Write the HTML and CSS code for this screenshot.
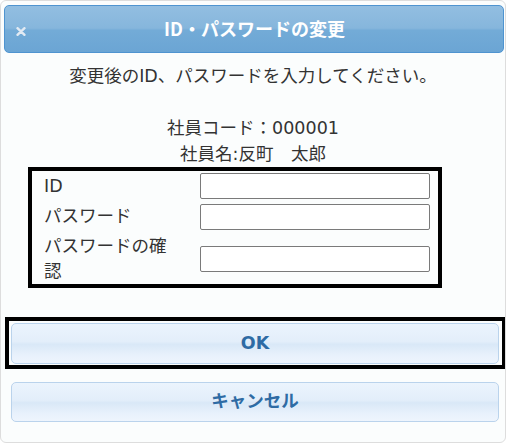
FILE: index.html
```html
<!DOCTYPE html>
<html lang="ja">
<head>
    <meta charset="UTF-8">
    <meta name="viewport" content="width=device-width, initial-scale=1.0">
    <title>ID・パスワードの変更</title>
    <link rel="stylesheet" href="styles.css">
</head>
<body>
    <div class="dialog">
        <!-- タイトルバー -->
        <div class="title-bar">
            <span class="close">
                <svg width="10" height="9" viewBox="0 0 10 9">
                    <path d="M1.5 1.2 L8.5 7.8 M8.5 1.2 L1.5 7.8" stroke="#e2eaf3" stroke-width="2.4" stroke-linecap="round"/>
                </svg>
            </span>
            <span class="title">ID・パスワードの変更</span>
        </div>

        <!-- メッセージ -->
        <div class="message">
            <p>変更後のID、パスワードを入力してください。</p>
            <p>&nbsp;</p>
            <p>社員コード：000001</p>
            <p>社員名:反町　太郎</p>
        </div>

        <!-- 入力欄 -->
        <div class="form-box">
            <label class="label">ID</label>
            <input type="text" class="field">
            <label class="label">パスワード</label>
            <input type="password" class="field">
            <label class="label tall">パスワードの確認</label>
            <input type="password" class="field">
        </div>

        <!-- ボタン -->
        <div class="ok-frame">
            <button class="button">OK</button>
        </div>
        <button class="button cancel">キャンセル</button>
    </div>
</body>
</html>
```

FILE: styles.css
```css
/* 全体 */
body {
    margin: 0;
    padding: 0;
    background-color: #ffffff;
    font-family: "DejaVu Sans", "Noto Sans CJK JP", sans-serif;
    color: #333333;
}

.dialog {
    box-sizing: border-box;
    width: 506px;
    height: 443px;
    border: 1px solid #dddddd;
    border-radius: 6px;
    background-color: #fbfdfd;
    overflow: hidden;
}

/* タイトルバー */
.title-bar {
    box-sizing: border-box;
    display: grid;
    grid-template-columns: 1fr auto 1fr;
    align-items: center;
    height: 48px;
    margin: 4px 1px 0 3px;
    padding-left: 11px;
    border: 1px solid #4f94d0;
    border-radius: 5px;
    background: linear-gradient(#92bee1 0%, #86b6dc 48%, #73abd7 53%, #6ba5d4 100%);
}

.close {
    display: flex;
    margin-top: 4px;
}

.title {
    font-family: "Noto Sans CJK JP", sans-serif;
    font-size: 18px;
    font-weight: bold;
    color: #ffffff;
    padding-right: 10px;
    padding-bottom: 2px;
}

/* メッセージ */
.message {
    margin-top: 10px;
    text-align: center;
    font-size: 17.5px;
    line-height: 26px;
}

.message p {
    margin: 0;
}

/* 入力欄 */
.form-box {
    box-sizing: border-box;
    display: grid;
    grid-template-columns: 156px 230px;
    grid-template-rows: 26px 27px 50px;
    row-gap: 4px;
    align-items: center;
    width: 414px;
    height: 121px;
    margin-left: 27px;
    padding: 2px 0 0 12px;
    border: 4px solid #000000;
    font-size: 17.5px;
}

.label {
    line-height: 25px;
}

.tall {
    width: 135px;
}

.field {
    box-sizing: border-box;
    width: 230px;
    height: 26px;
    border: 1px solid #7a7a7a;
    border-radius: 2px;
    background-color: #ffffff;
}

/* ボタン */
.ok-frame {
    box-sizing: border-box;
    width: 501px;
    margin: 29px 0 0 4px;
    padding: 2px 0 1px 2px;
    border: 4px solid #000000;
}

.button {
    box-sizing: border-box;
    display: block;
    width: 488px;
    height: 41px;
    padding: 0 0 2px 0;
    border: 1px solid #bad3ec;
    border-radius: 5px;
    background: linear-gradient(#ebf4fd 0%, #e3eefa 45%, #d9e8f7 52%, #e8f1fc 80%, #eef5fd 100%);
    font-family: "DejaVu Sans", "Noto Sans CJK JP", sans-serif;
    font-size: 17.5px;
    font-weight: bold;
    color: #2e6ba4;
    cursor: pointer;
}

.cancel {
    height: 40px;
    margin: 13px 0 0 10px;
    padding-bottom: 5px;
    font-family: "Noto Sans CJK JP", sans-serif;
}
```
